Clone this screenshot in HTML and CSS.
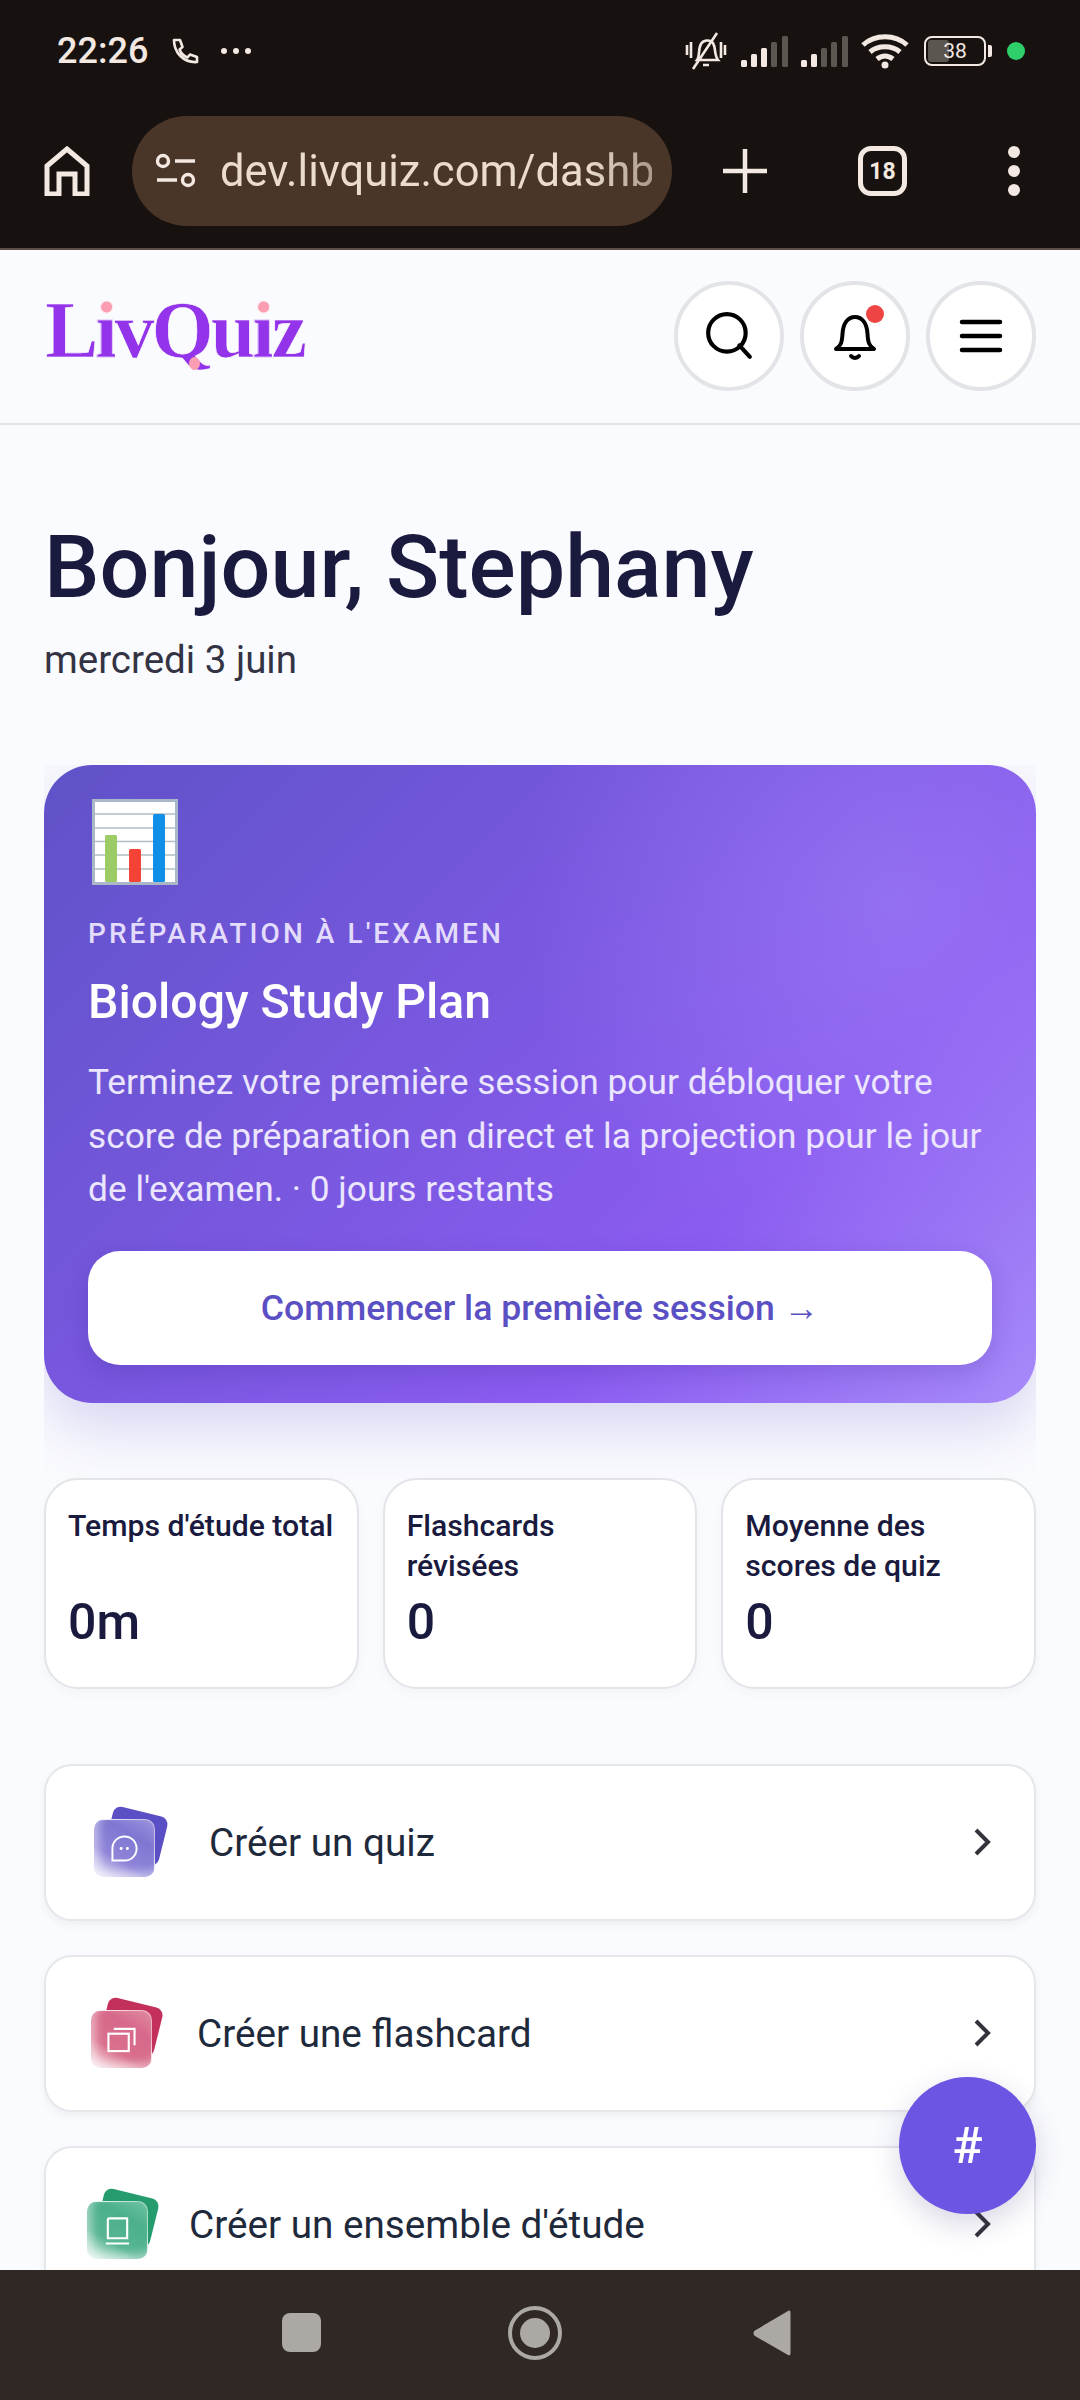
FILE: index.html
```html
<!DOCTYPE html>
<html lang="fr">
<head>
    <meta charset="UTF-8">
    <meta name="viewport" content="width=device-width, initial-scale=1.0">
    <title>LivQuiz</title>
    <link rel="stylesheet" href="styles.css">
</head>
<body>

<!-- Android status bar -->
<div class="status-bar">
    <div class="status-left">
        <span class="time">22:26</span>
        <svg class="ic-phone" viewBox="0 0 28 28" fill="none" stroke="#f3e9e2" stroke-width="2.6" stroke-linejoin="round"><path d="M3 3h6l2.500 7-3 2.500c1.500 4 4 6.500 8 8l2.500-3 7 2.500v5c-13 1-23-9-23-22z"/></svg>
        <span class="dots"><i></i><i></i><i></i></span>
    </div>
    <div class="status-right">
        <svg class="ic-mute" viewBox="0 0 46 40" fill="none" stroke="#f3e9e2" stroke-width="2.600"><path d="M14 29c3-4 1-11 4-16 2-4 9-5 12-1 3 5 1 12 5 17zM20 34h6M10 38 34 2"/><path d="M4 14v10M8 11v16M38 11v16M42 14v10"/></svg>
        <svg class="ic-signal" viewBox="0 0 48 32"><rect x="0" y="25" width="6" height="7" rx="1.500" fill="#f3e9e2"/><rect x="10" y="19" width="6" height="13" rx="1.500" fill="#f3e9e2"/><rect x="20" y="13" width="6" height="19" rx="1.500" fill="#f3e9e2"/><rect x="30" y="7" width="6" height="25" rx="1.500" fill="#5b5650"/><rect x="41" y="1" width="6" height="31" rx="1.500" fill="#5b5650"/></svg>
        <svg class="ic-signal" viewBox="0 0 48 32"><rect x="0" y="25" width="6" height="7" rx="1.500" fill="#f3e9e2"/><rect x="10" y="19" width="6" height="13" rx="1.500" fill="#f3e9e2"/><rect x="20" y="13" width="6" height="19" rx="1.500" fill="#5b5650"/><rect x="30" y="7" width="6" height="25" rx="1.500" fill="#5b5650"/><rect x="41" y="1" width="6" height="31" rx="1.500" fill="#5b5650"/></svg>
        <svg class="ic-wifi" viewBox="0 0 48 36" fill="none" stroke="#f3e9e2" stroke-width="5"><path d="M2 12c12-11 32-11 44 0M9 19c8-7 22-7 30 0M16 26c5-4 11-4 16 0"/><circle cx="24" cy="32" r="3.500" fill="#f3e9e2" stroke="none"/></svg>
        <div class="battery"><span class="battery-body"><span class="battery-fill"></span><span class="battery-num">38</span></span><span class="battery-tip"></span></div>
        <span class="green-dot"></span>
    </div>
</div>

<!-- Browser toolbar -->
<div class="toolbar">
    <svg class="ic-home" viewBox="0 0 46 50" fill="none" stroke="#f3e9e2" stroke-width="5"><path d="M3 48V20L23 3l20 17v28H31V28H15v20z"/></svg>
    <div class="url-pill">
        <svg class="ic-tune" viewBox="0 0 42 36" fill="none" stroke="#f3e9e2" stroke-width="3.400"><circle cx="8" cy="8" r="5.500"/><path d="M20 8h20M2 27h20"/><circle cx="33" cy="27" r="5.500"/></svg>
        <span class="url-text">dev.livquiz.com/dashboard</span>
    </div>
    <svg class="ic-plus" viewBox="0 0 46 46" stroke="#f3e9e2" stroke-width="4.500"><path d="M23 1v44M1 23h44"/></svg>
    <div class="tab-count">18</div>
    <span class="menu-dots"><i></i><i></i><i></i></span>
</div>

<!-- Site header -->
<header class="site-header">
    <div class="logo">L<span class="logo-i">i</span>vQu<span class="logo-i">i</span>z
        <i class="logo-dot"></i>
    </div>
    <div class="header-btns">
        <button class="round-btn"><svg class="ic-search" viewBox="0 0 48 48" fill="none" stroke="#000" stroke-width="4" stroke-linecap="round"><circle cx="22" cy="21" r="18"/><path d="M34 33l10 11"/></svg></button>
        <button class="round-btn has-badge"><svg viewBox="0 0 48 48" fill="none" stroke="#000" stroke-width="4" stroke-linejoin="round" stroke-linecap="round"><path d="M5 37c5-3 6-7 6.500-15C12 11 17 5 24 5s12 6 12.500 17c.500 8 1.500 12 6.500 15z"/><path d="M20 44c2 2.500 6 2.500 8 0"/></svg></button>
        <button class="round-btn"><svg viewBox="0 0 48 48" stroke="#000" stroke-width="4.500" stroke-linecap="round"><path d="M5 10h38M5 24h38M5 38h38"/></svg></button>
    </div>
</header>

<main class="content">
    <h1 class="greeting">Bonjour, Stephany</h1>
    <p class="date">mercredi 3 juin</p>

    <!-- wrapper clips the hero shadow at the card edges -->
    <div class="hero-wrap">
        <section class="hero">
            <svg class="hero-emoji" viewBox="0 0 86 86">
                <rect x="1.500" y="1.500" width="83" height="83" fill="#fff" stroke="#a9b7c9" stroke-width="3"/>
                <path d="M3 15h80M3 29h80M3 42.500h80M3 56h80M3 70h80" stroke="#b0bec5" stroke-width="1.500"/>
                <rect x="13" y="36" width="12" height="47" rx="1.500" fill="#9ccc65"/>
                <rect x="37" y="50" width="12" height="33" rx="1.500" fill="#f44336"/>
                <rect x="61" y="15" width="12" height="68" rx="1.500" fill="#0f8fe8"/>
            </svg>
            <div class="hero-label">PRÉPARATION À L'EXAMEN</div>
            <h2 class="hero-title">Biology Study Plan</h2>
            <p class="hero-text">Terminez votre première session pour débloquer votre score de préparation en direct et la projection pour le jour de l'examen. · 0 jours restants</p>
            <a class="hero-btn">Commencer la première session →</a>
        </section>
    </div>

    <div class="stats">
        <div class="stat-card">
            <div class="stat-label">Temps d'étude total</div>
            <div class="stat-value">0m</div>
        </div>
        <div class="stat-card">
            <div class="stat-label">Flashcards<br>révisées</div>
            <div class="stat-value">0</div>
        </div>
        <div class="stat-card">
            <div class="stat-label">Moyenne des<br>scores de quiz</div>
            <div class="stat-value">0</div>
        </div>
    </div>

    <div class="actions">
        <a class="action-row row-quiz">
            <span class="tile tile-purple">
                <i class="tile-back"></i>
                <i class="tile-front">
                    <svg viewBox="0 0 30 30" fill="none" stroke="#fff" stroke-width="2"><path d="M15 2.500c7 0 12.500 5.500 12.500 12.500S22 27.500 15 27.500H2.500V15C2.500 8 8 2.500 15 2.500z"/><circle cx="11.500" cy="15" r="1.500" fill="#fff" stroke="none"/><circle cx="18" cy="15" r="1.500" fill="#fff" stroke="none"/></svg>
                </i>
            </span>
            <span class="action-name">Créer un quiz</span>
            <svg class="chevron" viewBox="0 0 18 28" fill="none" stroke="#33333b" stroke-width="4"><path d="M2 2l12 12L2 26"/></svg>
        </a>
        <a class="action-row row-flash">
            <span class="tile tile-rose">
                <i class="tile-back"></i>
                <i class="tile-front">
                    <svg viewBox="0 0 30 30" fill="none" stroke="#fff" stroke-width="2.200"><rect x="1.500" y="9" width="21" height="18"/><path d="M7 4h21.500v17"/></svg>
                </i>
            </span>
            <span class="action-name">Créer une flashcard</span>
            <svg class="chevron" viewBox="0 0 18 28" fill="none" stroke="#33333b" stroke-width="4"><path d="M2 2l12 12L2 26"/></svg>
        </a>
        <a class="action-row row-set">
            <span class="tile tile-green">
                <i class="tile-back"></i>
                <i class="tile-front">
                    <svg viewBox="0 0 30 30" fill="none" stroke="#fff" stroke-width="2.200"><path d="M5 23V4c0-1 .500-1.500 1.500-1.500H25V23zM3 28.500h24"/></svg>
                </i>
            </span>
            <span class="action-name">Créer un ensemble d'étude</span>
            <svg class="chevron" viewBox="0 0 18 28" fill="none" stroke="#33333b" stroke-width="4"><path d="M2 2l12 12L2 26"/></svg>
        </a>
    </div>

    <button class="fab">#</button>
</main>

<!-- Android nav bar -->
<nav class="nav-bar">
    <span class="nav-square"></span>
    <span class="nav-circle"><i></i></span>
    <svg class="nav-back" viewBox="0 0 38 48" fill="#aca8a3"><path d="M35 2c1.500-1 2.500 0 2.500 1.500v41c0 1.500-1 2.500-2.500 1.500L2 27c-2-1.500-2-4 0-5.500z"/></svg>
</nav>

</body>
</html>
```

FILE: styles.css
```css
* {
    box-sizing: border-box;
}
html, body {
    margin: 0;
    padding: 0;
}
body {
    width: 1080px;
    height: 2400px;
    display: flex;
    flex-direction: column;
    overflow: hidden;
    font-family: Roboto, "Noto Sans", sans-serif;
    background: #fafbfe;
}
i {
    display: block;
}

/* status bar */
.status-bar {
    height: 102px;
    padding: 0 55px 0 57px;
    background: #17120f;
    display: flex;
    justify-content: space-between;
    align-items: center;
}
.status-left, .status-right {
    display: flex;
    align-items: center;
}
.time {
    color: #f3e9e2;
    font-size: 36px;
    font-weight: 500;
}
.ic-phone {
    width: 28px;
    height: 28px;
    margin-left: 23px;
}
.dots {
    display: flex;
    gap: 6px;
    margin-left: 22px;
}
.dots i {
    width: 6px;
    height: 6px;
    border-radius: 50%;
    background: #f3e9e2;
}
.ic-mute {
    width: 46px;
    height: 40px;
}
.ic-signal {
    width: 48px;
    height: 32px;
    margin-left: 12px;
}
.ic-wifi {
    width: 48px;
    height: 36px;
    margin-left: 12px;
}
.battery {
    display: flex;
    align-items: center;
    margin-left: 15px;
}
.battery-body {
    position: relative;
    width: 62px;
    height: 30px;
    border: 2.500px solid #f3e9e2;
    border-radius: 8px;
    display: flex;
    align-items: center;
    justify-content: center;
    overflow: hidden;
}
.battery-fill {
    position: absolute;
    left: 2px;
    top: 2px;
    bottom: 2px;
    width: 21px;
    border-radius: 3px;
    background: #5b5650;
}
.battery-num {
    position: relative;
    color: #f3e9e2;
    font-size: 21px;
}
.battery-tip {
    width: 4px;
    height: 12px;
    margin-left: 2px;
    border-radius: 0 2px 2px 0;
    background: #f3e9e2;
}
.green-dot {
    width: 18px;
    height: 18px;
    margin-left: 15px;
    border-radius: 50%;
    background: #2fd06a;
}

/* browser toolbar */
.toolbar {
    height: 148px;
    padding: 10px 0 18px 44px;
    background: #17120f;
    border-bottom: 2px solid #5b5048;
    display: flex;
    align-items: center;
}
.ic-home {
    width: 46px;
    height: 50px;
}
.url-pill {
    width: 540px;
    height: 110px;
    margin-left: 42px;
    padding: 0 20px 0 23px;
    border-radius: 55px;
    background: #4a3529;
    display: flex;
    align-items: center;
    overflow: hidden;
}
.ic-tune {
    width: 42px;
    height: 36px;
    flex: none;
}
.url-text {
    margin-left: 23px;
    color: #ecdcd0;
    font-size: 43.500px;
    white-space: nowrap;
    overflow: hidden;
    -webkit-mask-image: linear-gradient(90deg, #000 85%, rgba(0, 0, 0, 0.6));
    mask-image: linear-gradient(90deg, #000 85%, rgba(0, 0, 0, 0.6));
}
.ic-plus {
    width: 46px;
    height: 46px;
    margin-left: 50px;
}
.tab-count {
    width: 49px;
    height: 50px;
    margin-left: 90px;
    border: 5px solid #f3e9e2;
    border-radius: 13px;
    display: flex;
    align-items: center;
    justify-content: center;
    color: #f3e9e2;
    font-size: 23px;
    font-weight: 700;
}
.menu-dots {
    display: flex;
    flex-direction: column;
    gap: 7px;
    margin-left: 101px;
}
.menu-dots i {
    width: 12px;
    height: 12px;
    border-radius: 50%;
    background: #f3e9e2;
}

/* site header */
.site-header {
    height: 175px;
    flex: none;
    padding: 31px 44px 0 45px;
    border-bottom: 2px solid #e2e4e8;
    display: flex;
    justify-content: space-between;
    align-items: flex-start;
}
.logo {
    position: relative;
    color: #9333ea;
    font-family: "Liberation Serif", serif;
    font-weight: 700;
    font-size: 80px;
    letter-spacing: -3px;
    line-height: 98px;
    -webkit-text-stroke: 0.700px #fafbfe;
}
.logo-i {
    color: transparent;
    background: linear-gradient(#fb9eb2 34%, #9333ea 34%);
    -webkit-background-clip: text;
    background-clip: text;
}
.logo-dot {
    position: absolute;
    left: 144px;
    top: 76px;
    width: 11px;
    height: 13px;
    border-radius: 50%;
    background: #fb9eb2;
}
.header-btns {
    display: flex;
    gap: 16px;
}
.round-btn {
    position: relative;
    width: 110px;
    height: 110px;
    padding: 0;
    border: 4px solid #e2e4e8;
    border-radius: 50%;
    background: #fff;
    display: flex;
    align-items: center;
    justify-content: center;
}
.round-btn svg {
    width: 48px;
    height: 48px;
}
.round-btn .ic-search {
    width: 50px;
    height: 50px;
}
.has-badge::after {
    content: "";
    position: absolute;
    top: 20px;
    right: 22px;
    width: 18px;
    height: 18px;
    border-radius: 50%;
    background: #ef4444;
}

/* main content */
.content {
    flex: 1;
    min-height: 0;
    position: relative;
    padding: 92px 44px 0 44px;
    overflow: hidden;
}
.greeting {
    margin: 0;
    color: #1a1a3e;
    font-size: 88px;
    font-weight: 500;
    line-height: 100px;
}
.date {
    margin: 18px 0 0 0;
    color: #333344;
    font-size: 38.500px;
    line-height: 50px;
}
.hero-wrap {
    margin-top: 80px;
    padding-bottom: 75px;
    overflow: hidden;
}
.hero {
    padding: 34px 44px 38px 44px;
    border-radius: 48px;
    color: #fff;
    background:
        radial-gradient(circle at 86% 22%, rgba(167, 139, 250, 0.42), rgba(167, 139, 250, 0) 38%),
        linear-gradient(135deg, #5f52c8 0%, #8b5cf0 70%, #a78bfa 100%);
    box-shadow: 0 24px 60px rgba(91, 79, 201, 0.22);
}
.hero-emoji {
    display: block;
    width: 86px;
    height: 86px;
    margin-left: 4px;
}
.hero-label {
    margin-top: 33px;
    color: #e4dcfc;
    font-size: 28px;
    font-weight: 500;
    letter-spacing: 3.050px;
    line-height: 32px;
}
.hero-title {
    margin: 22px 0 0 0;
    font-size: 48.200px;
    font-weight: 500;
    line-height: 60px;
}
.hero-text {
    margin: 24px 0 0 0;
    color: #ebe5fd;
    font-size: 35.300px;
    line-height: 53.500px;
}
.hero-btn {
    height: 114px;
    margin-top: 34px;
    border-radius: 32px;
    background: #fff;
    color: #5b4fc4;
    font-size: 35.600px;
    font-weight: 500;
    display: flex;
    align-items: center;
    justify-content: center;
    box-shadow: 0 8px 24px rgba(40, 20, 120, 0.18);
}

/* stats */
.stats {
    display: grid;
    grid-template-columns: repeat(3, 1fr);
    gap: 24px;
}
.stat-card {
    height: 211px;
    padding: 26px 10px 0 22px;
    border: 2px solid #e2e4e8;
    border-radius: 34px;
    background: #fff;
    color: #1a1a3e;
    box-shadow: 0 4px 12px rgba(0, 0, 0, 0.03);
}
.stat-label {
    height: 80px;
    font-size: 30.200px;
    font-weight: 500;
    line-height: 40px;
}
.stat-value {
    margin-top: 6px;
    font-size: 50px;
    font-weight: 500;
    line-height: 60px;
}

/* action rows */
.actions {
    margin-top: 75px;
    display: flex;
    flex-direction: column;
    gap: 34px;
}
.action-row {
    height: 157px;
    flex: none;
    padding-right: 42px;
    border: 2px solid #e5e7eb;
    border-radius: 28px;
    background: #fff;
    box-shadow: 0 4px 8px rgba(0, 0, 0, 0.05);
    display: flex;
    align-items: center;
}
.row-quiz {
    padding-left: 48px;
}
.row-flash {
    padding-left: 45px;
}
.row-set {
    padding-left: 41px;
}
.tile {
    position: relative;
    width: 72px;
    height: 70px;
    flex: none;
}
.row-quiz .tile {
    width: 74px;
}
.tile-back {
    position: absolute;
    right: 4px;
    top: 4px;
    width: 56px;
    height: 50px;
    border-radius: 8px;
    transform: rotate(14deg);
}
.tile-front {
    position: absolute;
    left: 0;
    bottom: 0;
    width: 61px;
    height: 58px;
    border-radius: 10px;
    display: flex;
    align-items: center;
    justify-content: center;
    border-top: 1px solid rgba(255, 255, 255, 0.5);
    border-right: 1px solid rgba(255, 255, 255, 0.5);
    box-shadow: inset 5px -5px 9px rgba(255, 255, 255, 0.45);
}
.tile-front svg {
    width: 29px;
    height: 29px;
}
.tile-purple .tile-back {
    background: #5a4fc4;
}
.tile-purple .tile-front {
    background: linear-gradient(30deg, #f2f1fb 0%, #8f86d9 34%, #7f76d2 70%, #9a92dd 100%);
}
.tile-rose .tile-back {
    background: #c4305c;
}
.tile-rose .tile-front {
    background: linear-gradient(30deg, #fbeef1 0%, #d9708c 34%, #d7688a 70%, #e08ba2 100%);
}
.tile-green .tile-back {
    background: #259b6e;
}
.tile-green .tile-front {
    background: linear-gradient(30deg, #ecf8f3 0%, #58b692 34%, #4bb08b 70%, #6dc2a2 100%);
}
.action-name {
    flex: 1;
    color: #1e293b;
    font-size: 38.700px;
}
.row-quiz .action-name {
    margin-left: 41px;
}
.row-flash .action-name {
    margin-left: 34px;
}
.row-set .action-name {
    margin-left: 30px;
}
.chevron {
    width: 18px;
    height: 28px;
    flex: none;
}

/* floating button */
.fab {
    position: absolute;
    right: 44px;
    bottom: 56px;
    width: 137px;
    height: 137px;
    padding: 0;
    border: none;
    border-radius: 50%;
    background: #6c55e3;
    color: #fff;
    font-family: Roboto, sans-serif;
    font-size: 50px;
    font-weight: 500;
    box-shadow: 0 10px 30px rgba(60, 50, 120, 0.2);
}

/* nav bar */
.nav-bar {
    height: 130px;
    flex: none;
    padding-bottom: 5px;
    background: #2f2824;
    display: flex;
    align-items: center;
}
.nav-square {
    width: 39px;
    height: 39px;
    margin-left: 282px;
    border-radius: 8px;
    background: #aca8a3;
}
.nav-circle {
    width: 54px;
    height: 54px;
    margin-left: 187px;
    border: 4px solid #aca8a3;
    border-radius: 50%;
    display: flex;
    align-items: center;
    justify-content: center;
}
.nav-circle i {
    width: 30px;
    height: 30px;
    border-radius: 50%;
    background: #aca8a3;
}
.nav-back {
    width: 38px;
    height: 48px;
    margin-left: 191px;
}
```
